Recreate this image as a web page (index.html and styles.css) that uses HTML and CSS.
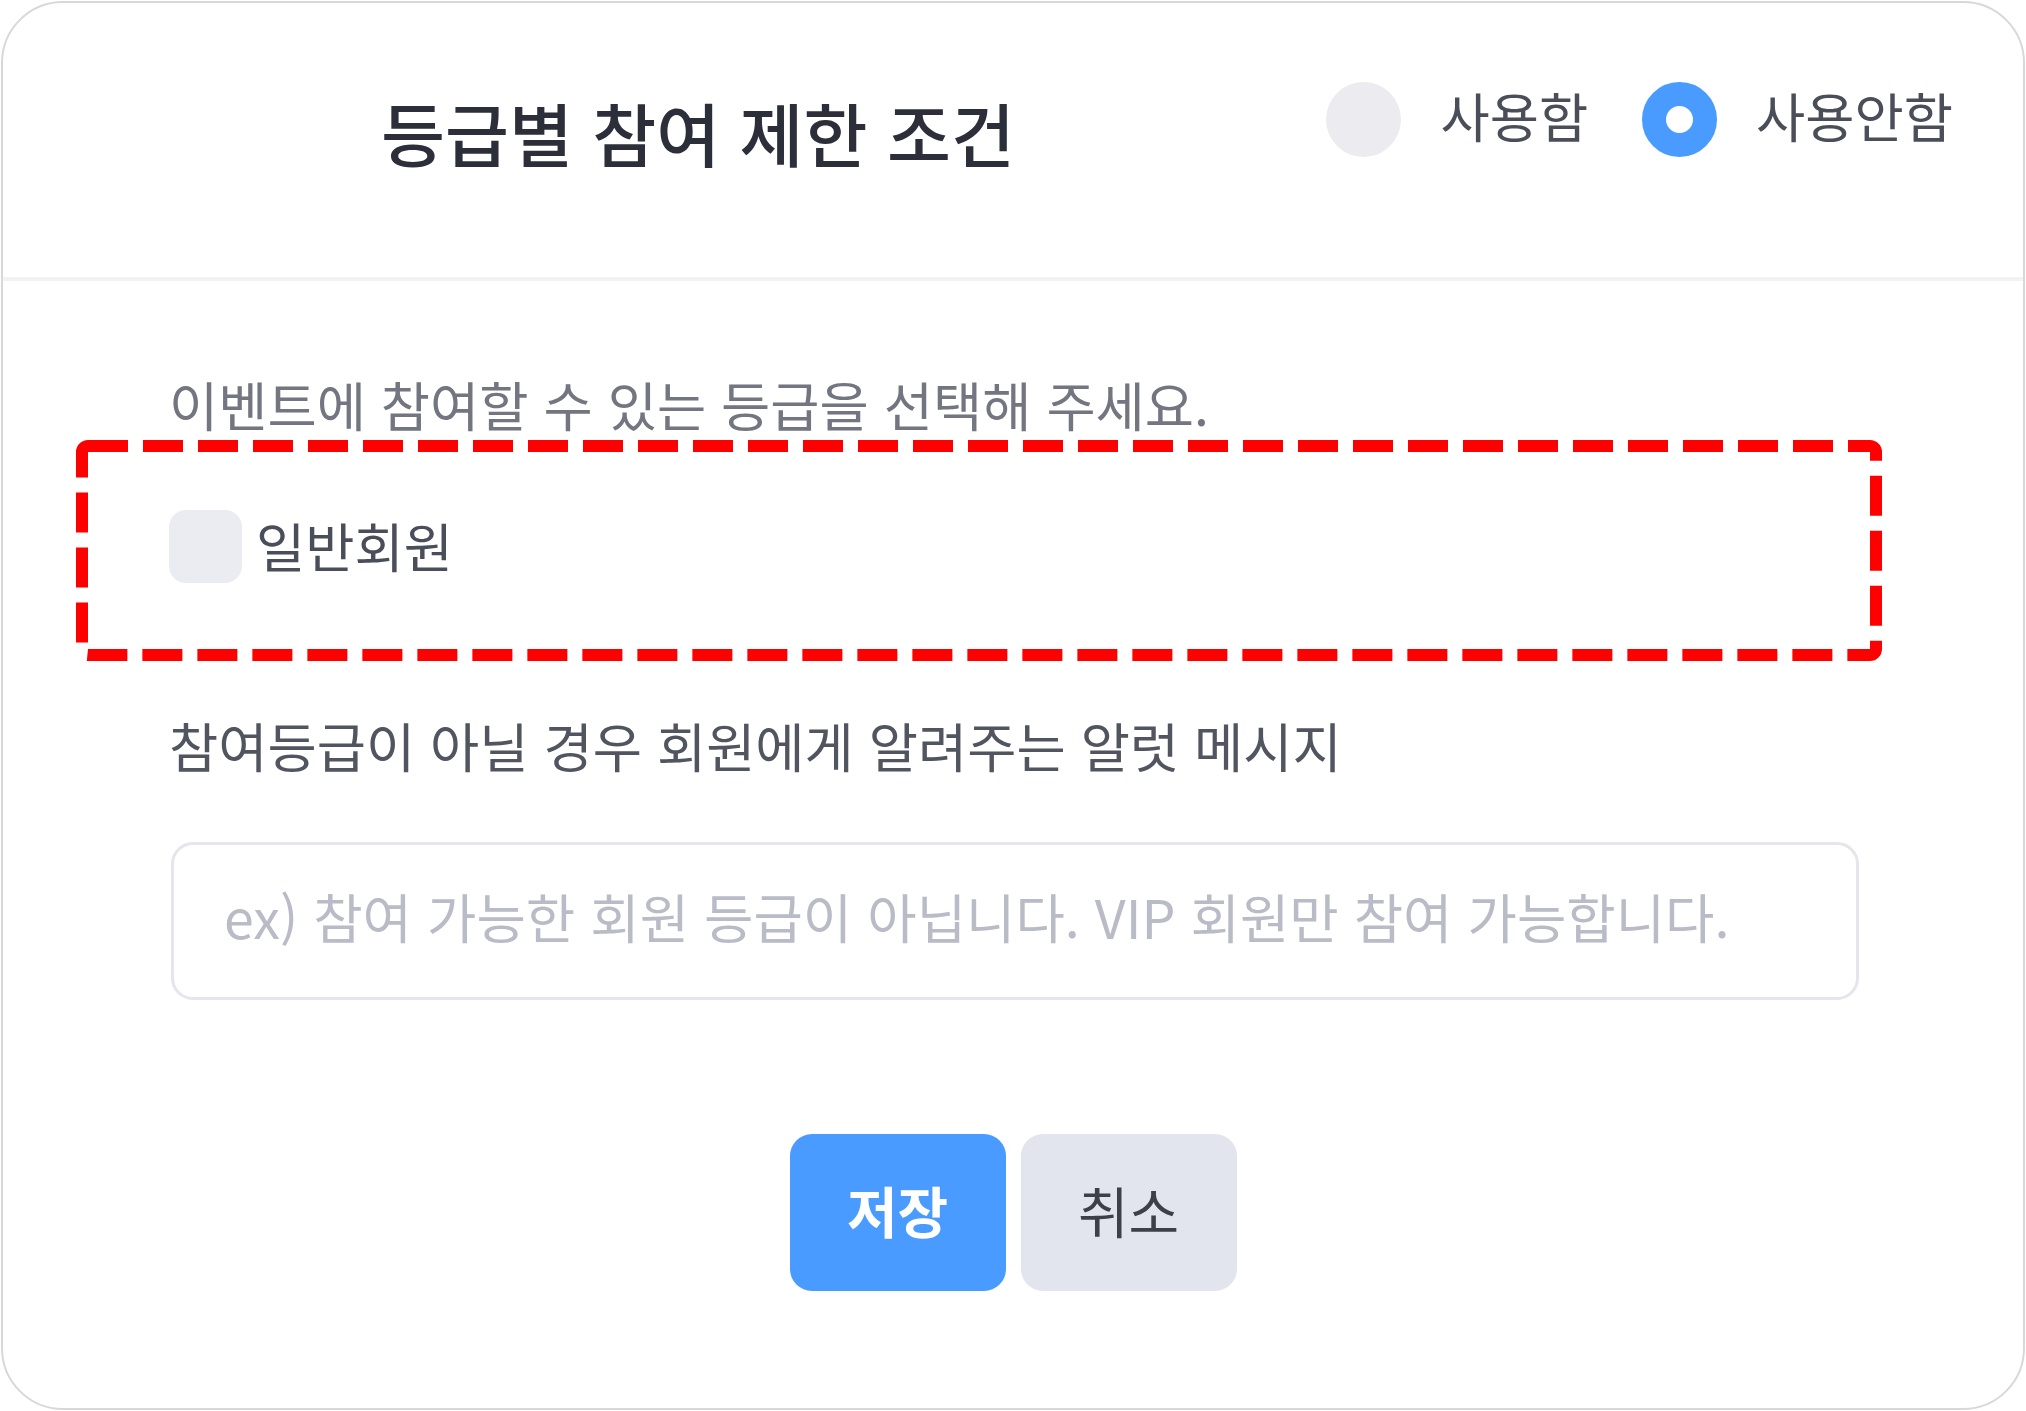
FILE: index.html
```html
<!DOCTYPE html>
<html lang="ko">
<head>
<meta charset="utf-8">
<title>등급별 참여 제한 조건</title>
<link rel="stylesheet" href="styles.css">
</head>
<body>
<div class="card">
  <div class="header">
    <h1 class="title">등급별 참여 제한 조건</h1>
    <div class="radio-group">
      <label class="radio-item">
        <span class="radio"></span>
        <span class="radio-label">사용함</span>
      </label>
      <label class="radio-item">
        <span class="radio radio-checked"></span>
        <span class="radio-label">사용안함</span>
      </label>
    </div>
  </div>
  <div class="body">
    <p class="hint">이벤트에 참여할 수 있는 등급을 선택해 주세요.</p>
    <div class="grade-row">
      <svg class="highlight" width="1806" height="221" viewBox="0 0 1806 221">
        <rect x="6" y="6" width="1794" height="209" rx="6" ry="6" fill="none" stroke="#ff0000" stroke-width="12" stroke-dasharray="40 15"></rect>
      </svg>
      <label class="check-item">
        <span class="checkbox"></span>
        <span class="check-label">일반회원</span>
      </label>
    </div>
    <p class="field-label">참여등급이 아닐 경우 회원에게 알려주는 알럿 메시지</p>
    <div class="input"><span class="placeholder">ex) 참여 가능한 회원 등급이 아닙니다. VIP 회원만 참여 가능합니다.</span></div>
    <div class="actions">
      <button class="btn btn-primary">저장</button>
      <button class="btn btn-secondary">취소</button>
    </div>
  </div>
</div>
</body>
</html>
```
FILE: styles.css
```css
* {
  box-sizing: border-box;
}

html, body {
  margin: 0;
  padding: 0;
  background: #ffffff;
}

body {
  font-family: "Noto Sans CJK KR", "Noto Sans", sans-serif;
  color: #3c404b;
}

.card {
  margin: 1px;
  width: 2024px;
  height: 1409px;
  border: 2px solid #d8d8da;
  border-radius: 62px;
  background: #ffffff;
  display: flex;
  flex-direction: column;
  overflow: hidden;
}

.header {
  display: flex;
  justify-content: space-between;
  align-items: flex-start;
  height: 278px;
  flex: none;
  border-bottom: 4px solid #f1f2f6;
  padding: 0 70px 0 378px;
}

.title {
  margin: 89px 0 0 0;
  font-size: 69.5px;
  line-height: 80px;
  font-weight: 500;
  color: #2c2f3a;
  letter-spacing: 0;
}

.radio-group {
  margin-top: 79px;
  display: flex;
  align-items: center;
  gap: 54px;
}

.radio-item {
  display: flex;
  align-items: center;
  gap: 39px;
}

.radio {
  width: 75px;
  height: 75px;
  border-radius: 50%;
  background: #ebebf0;
  flex: none;
}

.radio-checked {
  background: #ffffff;
  border: 24px solid #4a9bff;
}

.radio-label {
  font-size: 53.5px;
  line-height: 60px;
  padding-bottom: 10px;
  color: #4a4e59;
}

.body {
  padding: 93px 164px 0 166px;
  display: flex;
  flex-direction: column;
}

.hint {
  margin: 0;
  font-size: 53.5px;
  line-height: 60px;
  color: #737681;
}

.grade-row {
  position: relative;
  margin-top: 6px;
  height: 221px;
  padding-top: 70px;
}

.highlight {
  position: absolute;
  left: -93px;
  top: 0;
  pointer-events: none;
}

.check-item {
  display: flex;
  align-items: center;
  gap: 14px;
}

.checkbox {
  width: 73px;
  height: 73px;
  border-radius: 17px;
  background: #ebecf2;
  flex: none;
}

.check-label {
  font-size: 53.5px;
  line-height: 60px;
  padding-bottom: 4px;
  color: #4a4e5a;
}

.field-label {
  margin: 54px 0 0 0;
  font-size: 53.5px;
  line-height: 60px;
  color: #51555f;
}

.input {
  margin: 67px 0 0 2px;
  height: 158px;
  border: 3px solid #e4e5ed;
  border-radius: 22px;
  display: flex;
  align-items: center;
  padding: 0 0 10px 50px;
}

.placeholder {
  font-size: 53.7px;
  line-height: 60px;
  color: #b9bbc7;
  white-space: nowrap;
}

.actions {
  margin-top: 134px;
  display: flex;
  justify-content: center;
  gap: 15px;
  padding-right: 2px;
}

.btn {
  width: 216px;
  height: 157px;
  border: none;
  border-radius: 22px;
  font-family: "Noto Sans CJK KR", "Noto Sans", sans-serif;
  font-size: 55px;
  line-height: 60px;
  padding: 0 0 8px 0;
}

.btn-primary {
  background: #4a9bff;
  color: #ffffff;
  font-weight: 700;
}

.btn-secondary {
  background: #e3e5ee;
  color: #3c404b;
  font-weight: 400;
}
```
